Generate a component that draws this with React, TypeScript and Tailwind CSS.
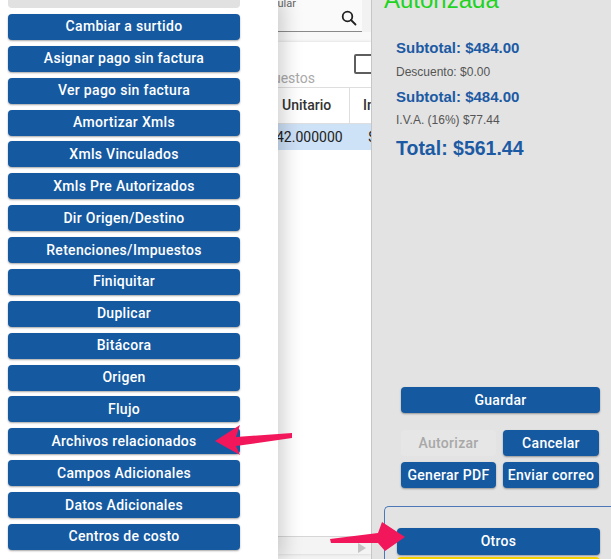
import React from 'react';

const drawerItems = [
  'Cambiar a surtido',
  'Asignar pago sin factura',
  'Ver pago sin factura',
  'Amortizar Xmls',
  'Xmls Vinculados',
  'Xmls Pre Autorizados',
  'Dir Origen/Destino',
  'Retenciones/Impuestos',
  'Finiquitar',
  'Duplicar',
  'Bitácora',
  'Origen',
  'Flujo',
  'Archivos relacionados',
  'Campos Adicionales',
  'Datos Adicionales',
  'Centros de costo',
];

const btn =
  'h-[26px] rounded-[4px] bg-[#1559a0] text-white text-[14px] font-medium tracking-[0.3px] shadow-[0_1px_2px_rgba(0,0,0,0.35)] flex items-center justify-center whitespace-nowrap';

function SearchIcon() {
  return (
    <svg width="16" height="16" viewBox="0 0 16 16" fill="none" stroke="#222" strokeWidth="1.8">
      <circle cx="6.5" cy="6.5" r="4.8" />
      <path d="M10 10l4.5 4.5" strokeLinecap="round" />
    </svg>
  );
}

function Arrows() {
  return (
    <svg className="absolute inset-0 pointer-events-none z-30" width="611" height="559" viewBox="0 0 611 559">
      <polygon
        fill="#f2175a"
        points="215,441 240,425 236,437 292,433 292,438 236,446 240,455"
      />
      <polygon
        fill="#f2175a"
        points="330,539 378,533 382,522 405,537 385,551 378,543 331,543"
      />
    </svg>
  );
}

export default function App() {
  return (
    <div className="relative w-[611px] h-[559px] overflow-hidden flex bg-[#f2f2f2] font-['Roboto',sans-serif]">
      {/* drawer */}
      <div className="relative z-20 w-[278px] h-full bg-white shadow-[6px_0_18px_rgba(0,0,0,0.18)] shrink-0">
        <div className="flex flex-col gap-[5.875px] pl-[8px] w-[240px] -mt-[18px]">
          <div className="h-[26px] rounded-[4px] bg-[#e1e1e1]" />
          {drawerItems.map((label) => (
            <div key={label} className={btn}>
              {label}
            </div>
          ))}
        </div>
      </div>

      {/* page behind the drawer */}
      <div className="relative w-[93px] h-full shrink-0 overflow-hidden flex flex-col">
        <div className="h-[32px] bg-[#fafafa] border-b border-[#8a8a8a] mr-[9px] relative">
          <div className="absolute right-[66px] -top-[2px] text-[11px] leading-none text-[#666] whitespace-nowrap">
            Buscar titular
          </div>
          <div className="absolute right-[5px] top-[10px]">
            <SearchIcon />
          </div>
        </div>
        <div className="h-[10px] bg-[#f9f9f9]" />
        <div className="flex-1 bg-white shadow-[0_0_3px_rgba(0,0,0,0.15)] flex flex-col mb-[5px]">
          <div className="h-[46px] border-b border-[#dedede] relative shrink-0">
            <div className="absolute right-[56px] top-[28px] text-[14px] leading-[16px] text-[#a9a9a9] whitespace-nowrap">
              Impuestos
            </div>
            <div className="absolute left-[76px] top-[12px] w-[20px] h-[20px] border-2 border-[#5e5e5e] rounded-[2px]" />
          </div>
          <div className="h-[36px] border-b border-[#dedede] flex text-[14px] font-medium text-[#333] shrink-0">
            <div className="w-[72px] shrink-0 border-r border-[#dedede] flex items-center pl-[4px]">Unitario</div>
            <div className="shrink-0 flex items-center pl-[13px]">Importe</div>
          </div>
          <div className="h-[26px] bg-[#cde1f7] flex items-center text-[14px] text-[#222] shrink-0">
            <div className="w-[72px] shrink-0 -ml-[2px]">42.000000</div>
            <div className="shrink-0 pl-[20px]">$</div>
          </div>
          <div className="flex-1" />
          <div className="h-[18px] border-t border-[#d6d6d6] bg-[#f4f4f4] relative shrink-0">
            <div className="absolute right-[5px] top-[6px] w-0 h-0 border-y-[5px] border-y-transparent border-l-[8px] border-l-[#c4c4c4]" />
          </div>
        </div>
      </div>

      {/* right summary panel */}
      <div className="relative w-[240px] h-full shrink-0 bg-[#e3e3e3] border-l border-[#c6c6c6] flex flex-col font-['Liberation_Sans',Arial,sans-serif]">
        <div className="pl-[12px] -mt-[12px] text-[24px] leading-[24px] text-[#1fd31f]">Autorizada</div>
        <div className="pl-[24px] mt-[27px] flex flex-col">
          <div className="h-[18px] text-[15px] leading-[18px] font-bold text-[#1c5aa3]">Subtotal: $484.00</div>
          <div className="mt-[7px] h-[16px] text-[12px] leading-[16px] text-[#555]">Descuento: $0.00</div>
          <div className="mt-[8px] h-[18px] text-[15px] leading-[18px] font-bold text-[#1c5aa3]">Subtotal: $484.00</div>
          <div className="mt-[6px] h-[16px] text-[12px] leading-[16px] text-[#555]">I.V.A. (16%) $77.44</div>
          <div className="mt-[8px] h-[24px] text-[19.5px] leading-[24px] font-bold text-[#1c5aa3]">Total: $561.44</div>
        </div>

        <div className="mt-[227px] pl-[29px] pr-[11px] flex flex-col font-['Roboto',sans-serif]">
          <div className={btn}>Guardar</div>
          <div className="mt-[17px] grid grid-cols-[95px_96px] gap-x-[7px] gap-y-[6px]">
            <div className="h-[26px] rounded-[4px] bg-[#e6e6e6] text-[#a8a8a8] text-[14px] font-medium tracking-[0.3px] flex items-center justify-center">
              Autorizar
            </div>
            <div className={btn}>Cancelar</div>
            <div className={btn}>Generar PDF</div>
            <div className={btn}>Enviar correo</div>
          </div>
        </div>

        <div className="mt-[18px] ml-[12px] -mr-[10px] flex-1 border-t border-l border-[#4d78b8] rounded-tl-[5px] pt-[21px] pl-[12px] pr-[21px] font-['Roboto',sans-serif]">
          <div className={btn + ' h-[27px]'}>Otros</div>
          <div className="mt-[2px] h-[10px] rounded-[4px] bg-[#f5d000]" />
        </div>
      </div>

      <Arrows />
    </div>
  );
}
